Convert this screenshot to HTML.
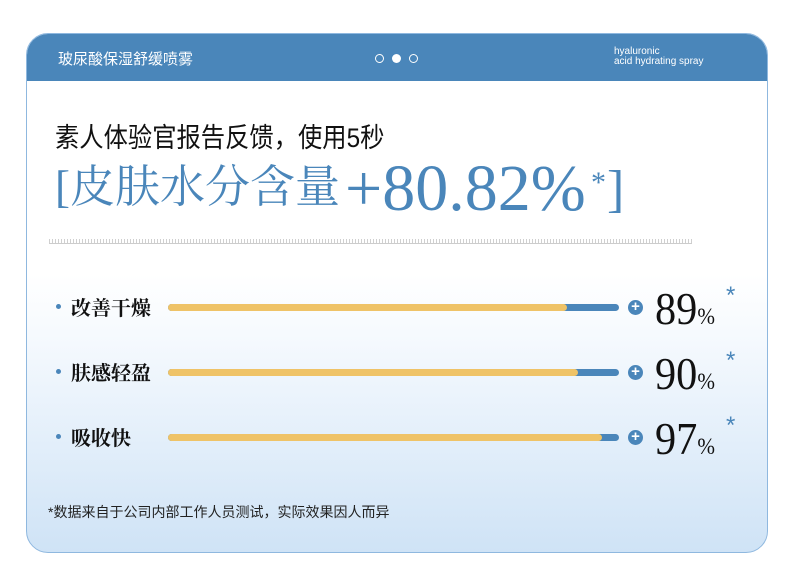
<!DOCTYPE html>
<html><head><meta charset="utf-8"><style>
body{margin:0;width:790px;height:582px;background:#fff;position:relative;overflow:hidden;font-family:"Liberation Sans","Noto Sans CJK SC",sans-serif}
.card{position:absolute;left:26px;top:33px;width:740px;height:518px;border-radius:22px;border:1.5px solid #8fb8df;overflow:hidden;background:linear-gradient(#fff 0,#fff 240px,#f6fafe 300px,#cfe3f6 518px)}
.hdr{position:absolute;left:0;top:0;width:100%;height:47px;background:#4a86ba;color:#fff}
.a{position:absolute;white-space:nowrap}
.lab{position:absolute;left:44px;font-family:"Noto Serif CJK SC",serif;font-weight:700;font-size:20px;color:#111}
.dot{position:absolute;left:29px;width:5px;height:5px;border-radius:50%;background:#4a86ba}
.bar{position:absolute;left:141px;width:451px;height:7px;border-radius:4px;background:#4a86ba}
.bar i{position:absolute;left:0;top:0;height:7px;border-radius:4px;background:#efc367}
.pl{position:absolute;left:601px;width:15px;height:15px;border-radius:50%;background:#4a86ba;color:#fff;font-size:15px;line-height:14px;text-align:center;font-weight:bold}
.num{position:absolute;left:628px;font-family:"Liberation Serif",serif;font-size:46px;color:#111;line-height:1;transform:scaleX(.92);transform-origin:left}
.num small{font-size:23px}
.ast{position:absolute;left:699px;color:#4a86ba;font-size:24px}
.bl{color:#4a86ba;font-family:'Liberation Serif','Noto Serif CJK SC',serif}
</style></head><body>
<div class="card">
<div class="hdr">
<div class="a" style="left:31px;top:14px;font-size:15px">玻尿酸保湿舒缓喷雾</div>
<div class="a" style="left:348px;top:20px;width:9px;height:9px;border:1.3px solid #fff;border-radius:50%;box-sizing:border-box"></div>
<div class="a" style="left:365px;top:20px;width:9px;height:9px;background:#fff;border-radius:50%"></div>
<div class="a" style="left:382px;top:20px;width:9px;height:9px;border:1.3px solid #fff;border-radius:50%;box-sizing:border-box"></div>
<div class="a" style="left:587px;top:13px;font-size:10px;line-height:10px">hyaluronic<br>acid hydrating spray</div>
</div>
<div class="a" style="left:28px;top:82px;font-size:27px;color:#111;transform:scaleX(.9);transform-origin:left">素人体验官报告反馈，使用5秒</div>
<div class="a bl" style="left:28px;top:128px;font-size:45px;line-height:50px">[皮肤水分含量</div>
<div class="a bl" style="left:318px;top:122px;font-size:66px;line-height:66px;transform:scaleX(1.0);transform-origin:left">+80.82%</div>
<div class="a bl" style="left:564px;top:132px;font-size:30px">*</div>
<div class="a bl" style="left:580px;top:128px;font-size:52px;line-height:56px">]</div>
<div class="a" style="left:22px;top:205px;width:643px;height:5px;background:repeating-linear-gradient(90deg,#bbb 0 1px,transparent 1px 3px);opacity:.7"></div>
<div class="a" style="left:22px;top:209px;width:643px;height:1px;background:#ccc"></div>

<div class="dot" style="top:270px"></div><div class="lab" style="top:258px">改善干燥</div>
<div class="bar" style="top:270px"><i style="width:399px"></i></div>
<div class="pl" style="top:266px">+</div>
<div class="num" style="top:252px">89<small>%</small></div><div class="ast" style="top:248px">*</div>

<div class="dot" style="top:335px"></div><div class="lab" style="top:323px">肤感轻盈</div>
<div class="bar" style="top:335px"><i style="width:410px"></i></div>
<div class="pl" style="top:331px">+</div>
<div class="num" style="top:317px">90<small>%</small></div><div class="ast" style="top:313px">*</div>

<div class="dot" style="top:400px"></div><div class="lab" style="top:388px">吸收快</div>
<div class="bar" style="top:400px"><i style="width:434px"></i></div>
<div class="pl" style="top:396px">+</div>
<div class="num" style="top:382px">97<small>%</small></div><div class="ast" style="top:378px">*</div>

<div class="a" style="left:21px;top:468px;font-size:14px;color:#222">*数据来自于公司内部工作人员测试，实际效果因人而异</div>
</div>
</body></html>
